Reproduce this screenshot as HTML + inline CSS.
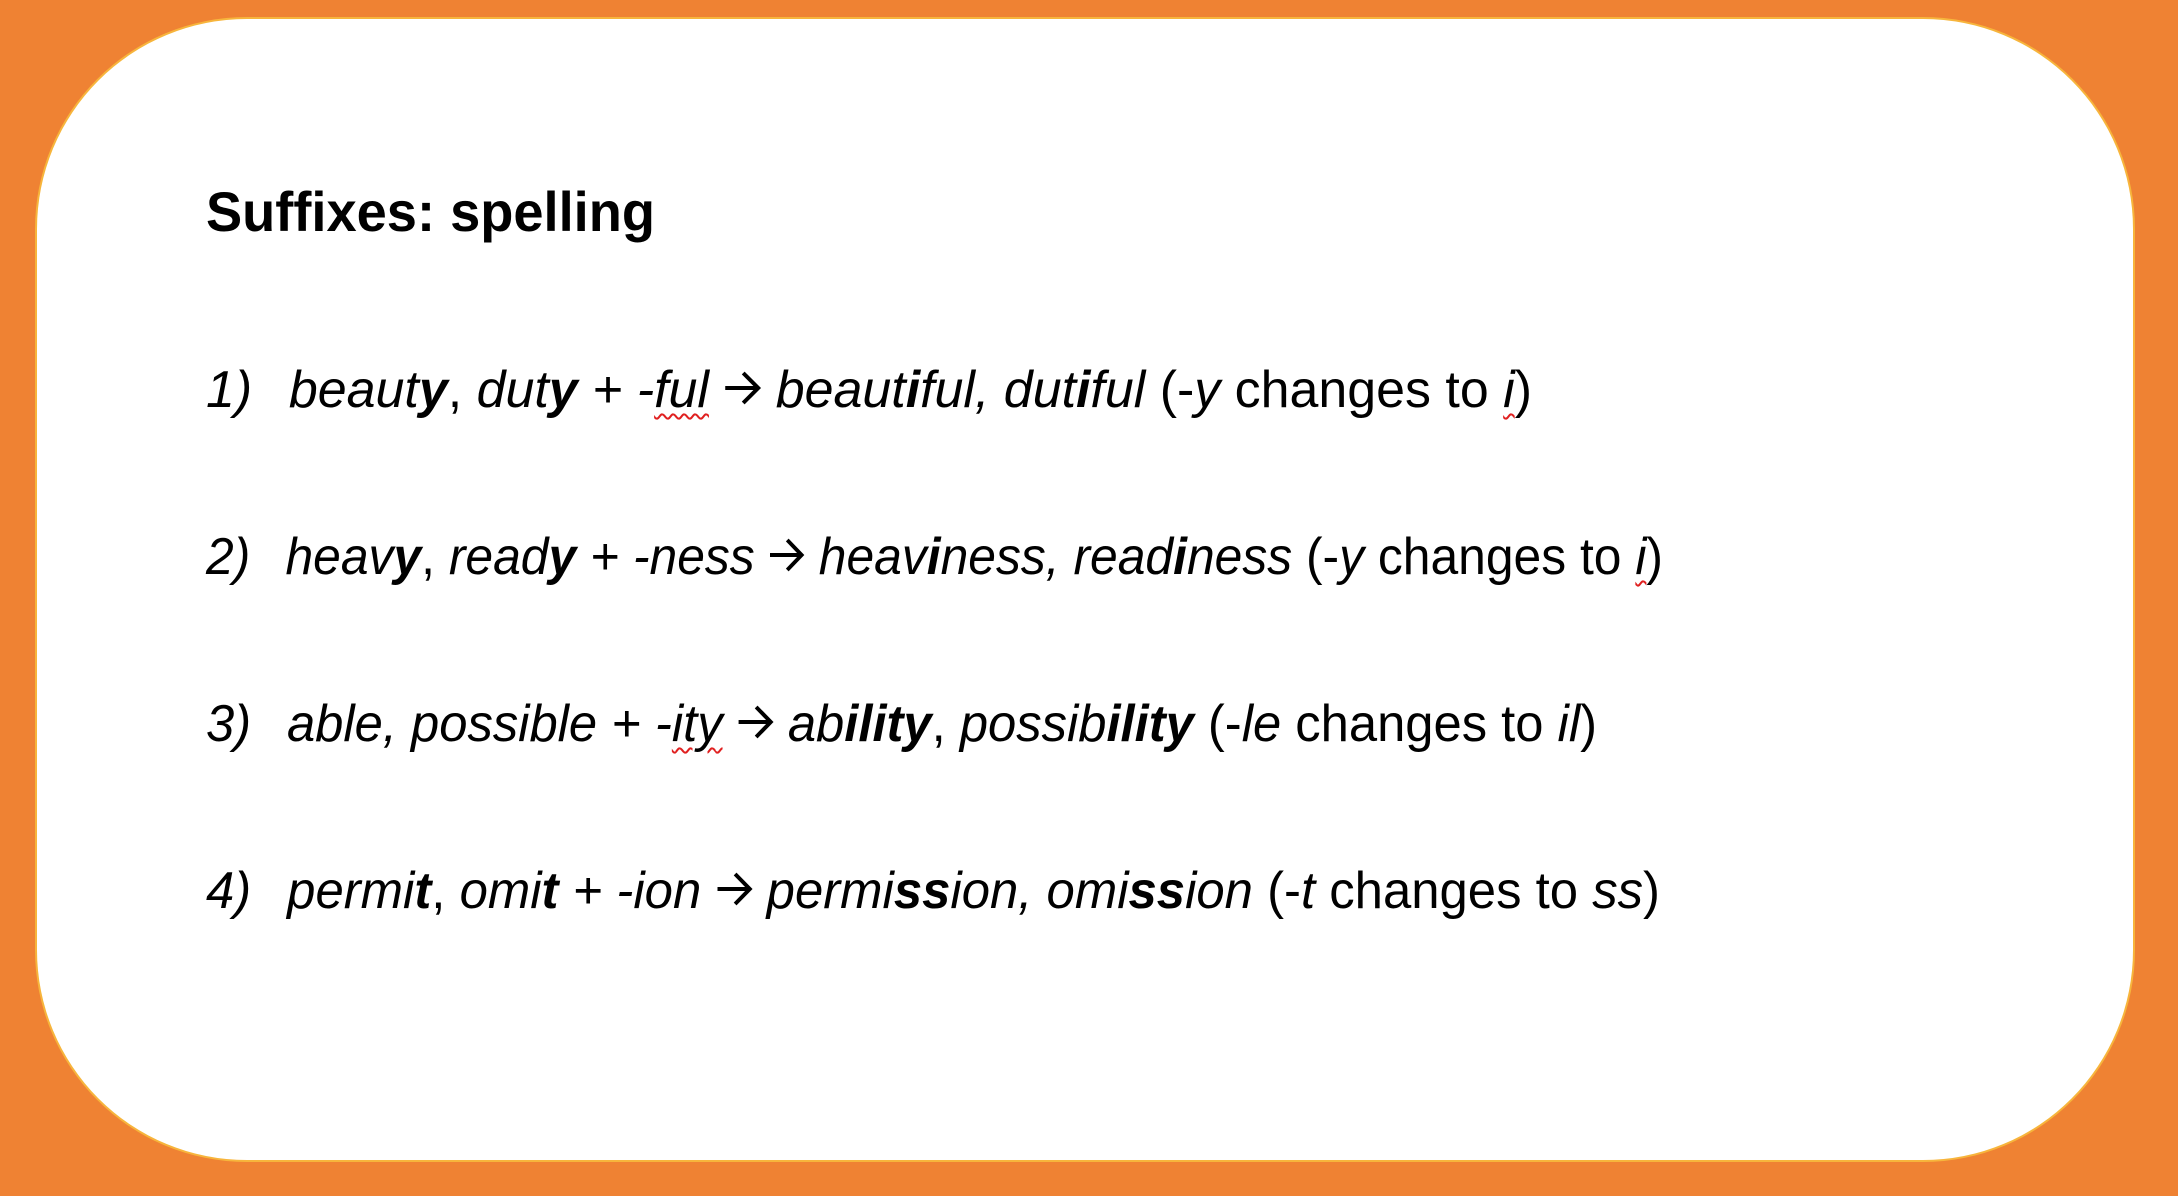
<!DOCTYPE html>
<html><head><meta charset="utf-8"><style>
html,body{margin:0;padding:0}
body{width:2178px;height:1196px;background:#EF8233;position:relative;overflow:hidden;font-family:"Liberation Sans",sans-serif;color:#000}
.card{position:absolute;left:37px;top:19px;width:2096px;height:1141px;background:#fff;border-radius:210px;box-shadow:0 0 0 2px #F7B53C}
.t{position:absolute;left:206px;white-space:nowrap;transform-origin:0 0}
.title{top:180px;font-size:56px;font-weight:bold;line-height:64px}
.ln{font-size:52px;line-height:60px}
.ln i{font-style:italic}
.sq{text-decoration:underline wavy #e02020;text-decoration-thickness:2px;text-underline-offset:6px}
.num{display:inline-block;width:83px;font-style:italic}
.ar{display:inline-block;width:38px;height:38px;vertical-align:baseline}
</style></head><body>
<div class="card"></div>
<div class="t title" data-w="449">Suffixes: spelling</div>
<div class="t ln" style="top:360px" data-w="1326"><span class="num">1)</span><i>beaut<b>y</b></i>, <i>dut<b>y</b> + -<span class="sq">ful</span> <svg class="ar" viewBox="0 0 38 38"><path d="M2 19H34M20 4L35 19L20 34" fill="none" stroke="#000" stroke-width="4"/></svg> beaut<b>i</b>ful, dut<b>i</b>ful</i> (-<i>y</i> changes to <i class="sq">i</i>)</div>
<div class="t ln" style="top:527px" data-w="1457"><span class="num">2)</span><i>heav<b>y</b></i>, <i>read<b>y</b> + -ness <svg class="ar" viewBox="0 0 38 38"><path d="M2 19H34M20 4L35 19L20 34" fill="none" stroke="#000" stroke-width="4"/></svg> heav<b>i</b>ness, read<b>i</b>ness</i> (-<i>y</i> changes to <i class="sq">i</i>)</div>
<div class="t ln" style="top:694px" data-w="1391"><span class="num">3)</span><i>able, possible + -<span class="sq">ity</span> <svg class="ar" viewBox="0 0 38 38"><path d="M2 19H34M20 4L35 19L20 34" fill="none" stroke="#000" stroke-width="4"/></svg> ab<b>ility</b></i>, <i>possib<b>ility</b></i> (-<i>le</i> changes to <i>il</i>)</div>
<div class="t ln" style="top:861px" data-w="1454"><span class="num">4)</span><i>permi<b>t</b></i>, <i>omi<b>t</b> + -ion <svg class="ar" viewBox="0 0 38 38"><path d="M2 19H34M20 4L35 19L20 34" fill="none" stroke="#000" stroke-width="4"/></svg> permi<b>ss</b>ion, omi<b>ss</b>ion</i> (-<i>t</i> changes to <i>ss</i>)</div>
<script>
document.querySelectorAll('.t').forEach(function(e){
  var w=e.getBoundingClientRect().width, tw=+e.getAttribute('data-w');
  if(w>0&&tw) e.style.transform='scaleX('+(tw/w)+')';
});
</script>
</body></html>
